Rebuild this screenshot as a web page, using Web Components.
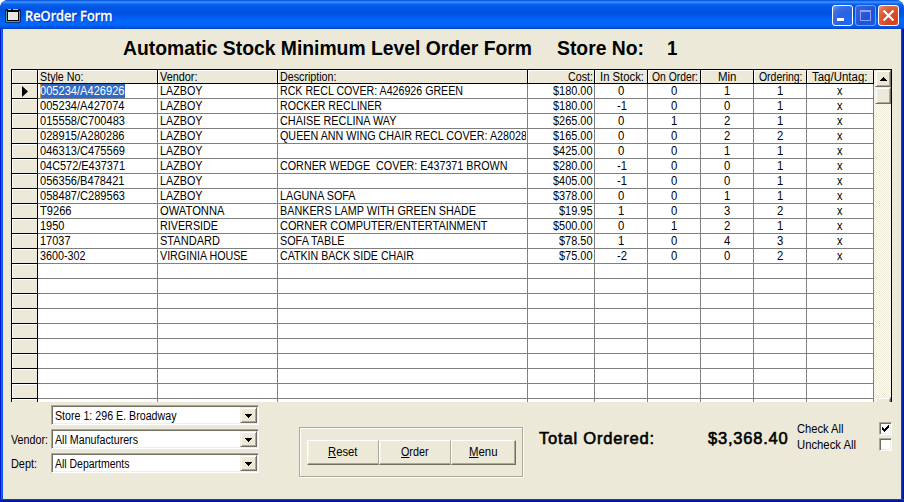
<!DOCTYPE html>
<html lang="en">
<head>
<meta charset="utf-8">
<title>ReOrder Form</title>
<style>
html,body{margin:0;padding:0;background:#fff;overflow:hidden}
body{width:904px;height:502px;font:12.5px/14px "Liberation Sans",Arial,sans-serif;color:#000}
</style>
</head>
<body>
<reorder-app></reorder-app>
<script>
const mount = (el, html) => { const r = el.attachShadow({mode:'open'}); r.innerHTML = html; return r; };

/* A run of text condensed or widened to a given width. */
class FitText extends HTMLElement {
  connectedCallback() {
    if (this.shadowRoot) return;
    const w = +this.getAttribute('w');
    const r = mount(this, `<style>:host{display:inline-block;width:${w}px;white-space:pre;vertical-align:top;text-align:left}
      span{display:inline-block;transform-origin:0 0;white-space:pre}</style><span><slot></slot></span>`);
    const s = r.querySelector('span');
    const n = s.getBoundingClientRect().width;
    if (n) s.style.transform = `scaleX(${w / n})`;
  }
}
customElements.define('fit-text', FitText);

class CaptionButton extends HTMLElement {
  connectedCallback() {
    if (this.shadowRoot) return;
    const kind = this.getAttribute('kind');
    const glyph = {
      min: '<rect x="5" y="13" width="7" height="3" fill="#fff"/>',
      max: '<path d="M5.5 6.5h10v9h-10z" fill="none" stroke="#8fa3ef"/><path d="M5 6h11" stroke="#8fa3ef" stroke-width="2"/>',
      close: '<path d="M5.5 5.5l10 10M15.5 5.5l-10 10" stroke="#fff" stroke-width="2.2"/>'
    }[kind];
    mount(this, `<style>
      :host{display:block;box-sizing:border-box;width:21px;height:21px;border:1px solid #fff;border-radius:3px;overflow:hidden;
        background:radial-gradient(circle at 85% 85%,#1a6cf4,#2a62e4 45%,#3d6fe0 75%,#7b9ff0)}
      :host([kind=max]){border-color:#7e9bee;background:linear-gradient(135deg,#3c66da,#1f52dc 60%,#2059e0)}
      :host([kind=close]){background:radial-gradient(circle at 75% 80%,#d8401a,#dc4f28 50%,#e2704e 80%,#f0a58e)}
      svg{display:block;margin:-1px}</style><svg width="21" height="21">${glyph}</svg>`);
  }
}
customElements.define('caption-button', CaptionButton);

class TitleBar extends HTMLElement {
  connectedCallback() {
    if (this.shadowRoot) return;
    mount(this, `<style>
      :host{display:flex;box-sizing:border-box;height:29px;padding:5px 5px 0 5px;border-radius:7px 7px 0 0;
        background:linear-gradient(#0047d8 0,#2b83f8 1.5px,#2f8bff 2.5px,#0a62ea 4px,#0055e4 8px,#0053e2 14px,#0061f8 19px,#0068ff 24px,#0060f0 26px,#0042c8 29px)}
      .icon{display:block;margin:3px 4px 0 0}
      .t{flex:1;color:#fff;font:500 13.5px/22px "Noto Sans","Open Sans",sans-serif;-webkit-text-stroke:.3px #fff;text-shadow:1px 1px 0 #0a2c9c}
      .b{display:flex;gap:2px}
    </style>
    <svg class="icon" width="16" height="16"><rect x=".5" y="1.5" width="15" height="13" fill="#000"/><path d="M1.5 3v10.5h13V3" fill="none" stroke="#4aa5ad"/><rect x="3" y="4" width="10" height="8" fill="#ece9e4"/><path d="M3 1.5h3M8 1.5h5" stroke="#7fd3dc"/></svg>
    <div class="t"><fit-text w="87.5"><slot></slot></fit-text></div>
    <div class="b"><caption-button kind="min"></caption-button><caption-button kind="max"></caption-button><caption-button kind="close"></caption-button></div>`);
  }
}
customElements.define('title-bar', TitleBar);

class ScrollBar extends HTMLElement {
  connectedCallback() {
    if (this.shadowRoot) return;
    mount(this, `<style>
      :host{display:flex;flex-direction:column;box-sizing:border-box;width:17px;padding-left:1px;height:332px;overflow:hidden;
        background:repeating-conic-gradient(#fff 0 25%,#ece9d8 0 50%) 0 0/2px 2px}
      .k{box-sizing:border-box;flex:none;height:17px;background:#ece9d8;border:1px solid;border-color:#f1efe2 #716f64 #716f64 #f1efe2;
        box-shadow:inset 1px 1px #fff,inset -1px -1px #aca899}
      .g{flex:1}
      svg{display:block}
    </style><div class="k"><svg width="14" height="15"><path d="M7 6h1v1h1v1h1v1h1v1H4V9h1V8h1V7h1z"/></svg></div>
    <div class="k"></div><div class="g"></div><div class="k" style="margin-bottom:-12px"></div>`);
  }
}
customElements.define('scroll-bar', ScrollBar);

const HEADS = [['Style No:',43.5],['Vendor:',37.5],['Description:',56.5],['Cost:',25],['In Stock:',44],['On Order:',46],['Min',18.5],['Ordering:',43.5],['Tag/Untag:',55.5]];
const ROWS = [
 ['005234/A426926',84.5,'LAZBOY',42.5,'RCK RECL COVER: A426926 GREEN',183,'$180.00','0','0','1','1'],
 ['005234/A427074',84.5,'LAZBOY',42.5,'ROCKER RECLINER',102,'$180.00','-1','0','0','1'],
 ['015558/C700483',85,'LAZBOY',42.5,'CHAISE RECLINA WAY',116.5,'$265.00','0','1','2','1'],
 ['028915/A280286',84.5,'LAZBOY',42.5,'QUEEN ANN WING CHAIR RECL COVER: A28028',247,'$165.00','0','0','2','2'],
 ['046313/C475569',85,'LAZBOY',42.5,'',0,'$425.00','0','0','1','1'],
 ['04C572/E437371',85,'LAZBOY',42.5,'CORNER WEDGE  COVER: E437371 BROWN',227.5,'$280.00','-1','0','0','1'],
 ['056356/B478421',84.5,'LAZBOY',42.5,'',0,'$405.00','-1','0','0','1'],
 ['058487/C289563',85,'LAZBOY',42.5,'LAGUNA SOFA',75.5,'$378.00','0','0','1','1'],
 ['T9266',31.5,'OWATONNA',64.5,'BANKERS LAMP WITH GREEN SHADE',196,'$19.95','1','0','3','2'],
 ['1950',24.5,'RIVERSIDE',58,'CORNER COMPUTER/ENTERTAINMENT',207.5,'$500.00','0','1','2','1'],
 ['17037',30.5,'STANDARD',60,'SOFA TABLE',64.5,'$78.50','1','0','4','3'],
 ['3600-302',45.5,'VIRGINIA HOUSE',87.5,'CATKIN BACK SIDE CHAIR',134,'$75.00','-2','0','0','2']
];

class StockGrid extends HTMLElement {
  connectedCallback() {
    if (this.shadowRoot) return;
    const fit = (t, w) => t ? `<fit-text w="${w}">${t}</fit-text>` : '';
    let h = '<div class="row head"><div class="sel"></div>' + HEADS.map(([t, w], i) =>
      `<div class="c ${i < 3 ? '' : i === 3 ? 'r' : 'm'}">${fit(t, w)}</div>`).join('') + '</div>';
    for (let i = 0; i < 22; i++) {
      const d = ROWS[i];
      h += `<div class="row"><div class="sel">${i ? '' : '<svg width="25" height="14"><path d="M10 2v11l6-5.500z"/></svg>'}</div>`;
      if (d) {
        h += `<div class="c">${i ? fit(d[0], d[1]) : '<span class="hi">' + fit(d[0], d[1]) + '</span>'}</div><div class="c">${fit(d[2], d[3])}</div><div class="c"><div class="clip">${fit(d[4], d[5])}</div></div>`;
        h += `<div class="c r">${fit(d[6], d[6].length > 6 ? 39.5 : 33.5)}</div>`;
        for (let j = 7; j < 11; j++) h += `<div class="c m">${fit(d[j], d[j].length > 1 ? 10 : 6.3)}</div>`;
        h += `<div class="c m">${fit('x', 5.5)}</div>`;
      } else h += '<div class="c"></div>'.repeat(9);
      h += '</div>';
    }
    mount(this, `<style>
      :host{display:flex;box-sizing:border-box;width:881px;height:333px;border:1px solid #000;border-bottom:0;overflow:hidden;background:#fff}
      .rows{width:862px;overflow:hidden}
      .row{display:grid;grid-template-columns:26px 120px 120px 250px 67px 53px 53px 53px 53px 67px;height:15px}
      .row>div{box-sizing:border-box;overflow:hidden;height:100%}
      .head{height:14px}
      .c{border-right:1px solid #808080;border-bottom:1px solid #808080;padding:0 1px 0 2px;white-space:nowrap}
      .c:last-child{padding-left:1px}
      .head .c{background:#ece9d8;border-color:#000;box-shadow:inset 1px 1px #fff}
      .clip{width:246px;height:14px;overflow:hidden}
      .r{text-align:right;padding-right:1.5px}.m{text-align:center}
      .sel{background:#ece9d8;border-right:1px solid #000;border-bottom:1px solid #000;box-shadow:inset 1px 1px #fff}
      .sel svg{display:block}
      .hi{display:inline-block;height:14px;background:#316ac5;color:#fff;box-shadow:inset 1px 0 #ce953a}
    </style><div class="rows">${h}</div><scroll-bar></scroll-bar>`);
  }
}
customElements.define('stock-grid', StockGrid);

class ComboBox extends HTMLElement {
  connectedCallback() {
    if (this.shadowRoot) return;
    mount(this, `<style>
      :host{display:flex;box-sizing:border-box;width:208px;height:20px;background:#fff;border:1px solid;border-color:#aca899 #fff #fff #aca899;
        box-shadow:inset 1px 1px #716f64,inset -1px -1px #f1efe2;padding:1px 1px 1px 3px}
      .t{flex:1;padding-top:2px}
      .k{box-sizing:border-box;width:17px;height:16px;background:#ece9d8;border:1px solid;border-color:#f1efe2 #716f64 #716f64 #f1efe2;
        box-shadow:inset 1px 1px #fff,inset -1px -1px #aca899}
      svg{display:block}
    </style><div class="t"><slot></slot></div><div class="k"><svg width="15" height="14"><path d="M4 6h7v1h-1v1h-1v1h-1v1h-1v-1h-1v-1h-1v-1h-1z"/></svg></div>`);
  }
}
customElements.define('combo-box', ComboBox);

class FormButton extends HTMLElement {
  connectedCallback() {
    if (this.shadowRoot) return;
    mount(this, `<style>
      :host{display:flex;justify-content:center;box-sizing:border-box;height:25px;padding-top:4px;
        border-top:1px solid #fff;border-left:1px solid #fff;border-right:1px solid #aca899;border-bottom:1px solid #716f64;
        box-shadow:inset 0 -1px #aca899,inset 1px 0 #f5f3ea}
      :host([last]){border-right-color:#716f64;box-shadow:inset -1px -1px #aca899}
    </style><slot></slot>`);
  }
}
customElements.define('form-button', FormButton);

class CheckBox extends HTMLElement {
  connectedCallback() {
    if (this.shadowRoot) return;
    mount(this, `<style>
      :host{display:block;box-sizing:border-box;width:13px;height:13px;background:#fff;border:1px solid;border-color:#aca899 #fff #fff #aca899;
        box-shadow:inset 1px 1px #716f64,inset -1px -1px #f1efe2}
      svg{display:block}
    </style>${this.hasAttribute('checked') ? '<svg width="11" height="11"><path d="M2 4h1v1h1v1h1v-1h1v-1h1v-1h1v-1h1v3h-1v1h-1v1h-1v1h-1v1h-1v-1h-1v-1h-1z"/></svg>' : ''}`);
  }
}
customElements.define('check-box', CheckBox);

class ReorderApp extends HTMLElement {
  connectedCallback() {
    if (this.shadowRoot) return;
    mount(this, `<style>
      :host{display:block;box-sizing:border-box;width:904px;height:502px;border-radius:8px 8px 0 0;overflow:hidden;background:#0047d8}
      .client{box-sizing:border-box;height:470px;margin:0 3px;background:#ece9d8;padding:9px 0 0 8px;
        box-shadow:-1px 0 #0855dd,-2px 0 #166aee,-3px 0 #0019cf,1px 0 #0441d8,2px 0 #0029b8,3px 0 #00138c,0 1px #0441d8}
      .edge{height:3px;background:linear-gradient(#0441d8 0 1px,#0020a8 1px 2px,#00138c 2px)}
      .title{display:flex;height:31px;font:bold 19.5px/21px "Liberation Sans",Arial,sans-serif;padding-left:111.5px}
      .foot{display:grid;grid-template-columns:248px 40px 224px 16px 249px 9px 1fr;height:97px}
      .filters{display:grid;grid-template-columns:40px 208px;grid-auto-rows:20px;row-gap:4px;padding-top:3px}
      .filters span{padding-top:4px}
      .frame{box-sizing:border-box;margin-top:25px;height:50px;border:1px solid #aca899;box-shadow:inset 1px 1px #fff,1px 1px #fff;
        display:grid;grid-template-columns:72px 72px 65px;padding:12px 0 0 7px}
      u{text-decoration:underline;text-underline-offset:1px;text-decoration-thickness:1px;text-decoration-skip-ink:none}
      .total{display:flex;justify-content:space-between;padding-top:28px;font:17px/18px "Liberation Sans",Arial,sans-serif;letter-spacing:.8px;-webkit-text-stroke:.6px #000}
      .checks{display:grid;grid-template-columns:82px 13px;grid-auto-rows:16px;padding-top:20px}
    </style>
    <title-bar>ReOrder Form</title-bar>
    <div class="client">
      <div class="title"><fit-text w="409">Automatic Stock Minimum Level Order Form</fit-text>
        <fit-text w="87" style="margin-left:25px">Store No:</fit-text><fit-text w="10.4" style="margin-left:23px">1</fit-text></div>
      <stock-grid></stock-grid>
      <div class="foot">
        <div class="filters">
          <span></span><combo-box><fit-text w="121.500">Store 1: 296 E. Broadway</fit-text></combo-box>
          <span><fit-text w="37">Vendor:</fit-text></span><combo-box><fit-text w="83">All Manufacturers</fit-text></combo-box>
          <span><fit-text w="26">Dept:</fit-text></span><combo-box><fit-text w="74.500">All Departments</fit-text></combo-box>
        </div>
        <div></div>
        <div class="frame">
          <form-button><fit-text w="29.500"><u>R</u>eset</fit-text></form-button>
          <form-button><fit-text w="27.5"><u>O</u>rder</fit-text></form-button>
          <form-button last><fit-text w="28.500"><u>M</u>enu</fit-text></form-button>
        </div>
        <div></div>
        <div class="total"><fit-text w="116">Total Ordered:</fit-text><fit-text w="80.500">$3,368.40</fit-text></div>
        <div></div>
        <div class="checks"><fit-text w="46.500">Check All</fit-text><check-box checked></check-box>
          <fit-text w="59">Uncheck All</fit-text><check-box></check-box></div>
      </div>
    </div>
    <div class="edge"></div>`);
  }
}
customElements.define('reorder-app', ReorderApp);
</script>
</body>
</html>
